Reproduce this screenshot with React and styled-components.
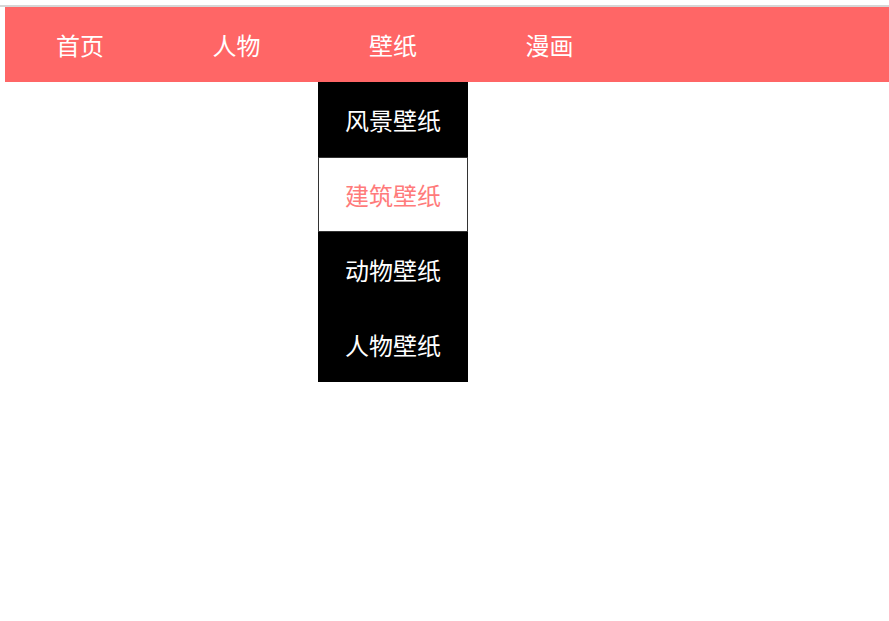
import styled, { createGlobalStyle } from 'styled-components';

const GlobalStyle = createGlobalStyle`
  html, body {
    margin: 0;
    background: #fff;
    font-family: "Noto Sans CJK SC", "Noto Sans", sans-serif;
  }
`;

const Page = styled.div`
  min-height: 100vh;
  padding-top: 5px;
  box-sizing: border-box;
`;

const TopLine = styled.div`
  height: 2px;
  background-color: #d6d6d6;
`;

const NavBar = styled.div`
  margin-left: 5px;
  height: 75px;
  background-color: #ff6666;
  display: flex;
  gap: 6.5px;
`;

const NavItem = styled.div`
  position: relative;
  width: 150px;
  height: 75px;
`;

const NavLabel = styled.div`
  height: 75px;
  line-height: 75px;
  text-align: center;
  font-size: 24px;
  color: #fff;
`;

const Dropdown = styled.div`
  position: absolute;
  top: 75px;
  left: 0;
  z-index: 10;
  width: 150px;
  background-color: #000;
`;

const DropItem = styled.div`
  box-sizing: border-box;
  height: 75px;
  line-height: ${(p) => (p.$active ? '73px' : '75px')};
  text-align: center;
  font-size: 24px;
  color: ${(p) => (p.$active ? '#ff7b7b' : '#fff')};
  background-color: ${(p) => (p.$active ? '#fff' : '#000')};
  border: ${(p) => (p.$active ? '1px solid #333' : 'none')};
`;

const menu = [
  { title: '首页' },
  { title: '人物' },
  { title: '壁纸', children: ['风景壁纸', '建筑壁纸', '动物壁纸', '人物壁纸'], active: 1 },
  { title: '漫画' },
];

const App = () => {
  return (
    <Page>
      <GlobalStyle />
      <TopLine />
      <NavBar>
        {menu.map((item) => (
          <NavItem key={item.title}>
            <NavLabel>{item.title}</NavLabel>
            {item.children ? (
              <Dropdown>
                {item.children.map((child, i) => (
                  <DropItem key={child} $active={i === item.active}>
                    {child}
                  </DropItem>
                ))}
              </Dropdown>
            ) : null}
          </NavItem>
        ))}
      </NavBar>
    </Page>
  );
};

export default App;
